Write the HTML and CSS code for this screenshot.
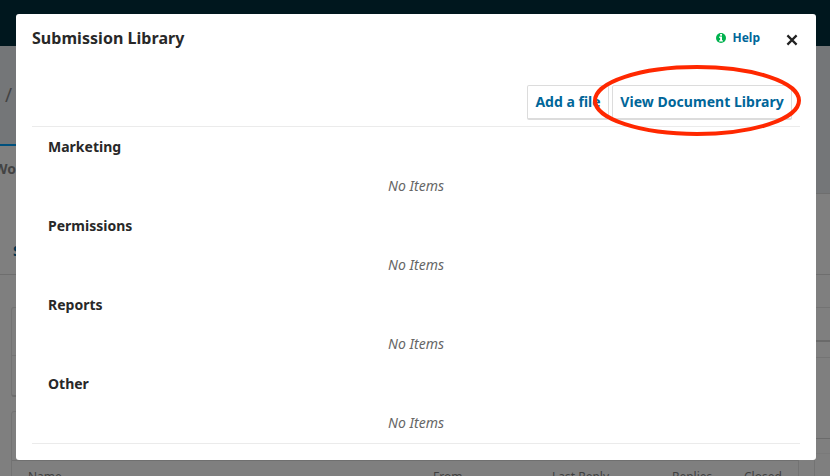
FILE: index.html
```html
<!DOCTYPE html>
<html lang="en">
<head>
<meta charset="utf-8">
<title>Submission Library</title>
<link rel="stylesheet" href="styles.css">
</head>
<body>
<div class="page">
  <header class="topbar"></header>
  <div class="band">
    <div class="crumb">/</div>
    <div class="tab"><span>Wo</span></div>
  </div>
  <div class="subhead"><span>S</span></div>
  <div class="content">
    <main class="main">
      <section class="panel summary"><div class="summary-head"></div></section>
      <section class="panel discussions">
        <div class="panel-head"></div>
        <div class="thead"><span class="name">Name</span><span class="from">From</span><span class="last">Last Reply</span><span class="replies">Replies</span><span>Closed</span></div>
      </section>
    </main>
    <aside class="side">
      <div class="side-action"></div>
      <div class="side-title"></div>
      <div class="side-body"></div>
      <div class="side-foot"></div>
    </aside>
  </div>
</div>
<div class="modal" role="dialog">
  <div class="modal-head">
    <h1>Submission Library</h1>
    <a class="help"><svg width="10" height="10" viewBox="0 0 10 10"><circle cx="5" cy="5" r="5" fill="#00b24e"/><path d="M4.1 1.1h1.9v1.6H4.1zM3.2 3.6h2.8v3.6h.9v1.3H3.1V7.2h1V4.9h-.9z" fill="#fff"/></svg><span>Help</span></a>
    <svg class="close" width="12" height="12" viewBox="0 0 12 12"><path d="M1.4 1.4l9.2 9.2M10.6 1.4l-9.2 9.2" stroke="#222" stroke-width="2.2"/></svg>
  </div>
  <div class="actions"><a class="btn">Add a file</a><a class="btn view">View Document Library</a></div>
  <div class="list">
    <section><h2>Marketing</h2><p>No Items</p></section>
    <section><h2>Permissions</h2><p>No Items</p></section>
    <section><h2>Reports</h2><p>No Items</p></section>
    <section><h2>Other</h2><p>No Items</p></section>
  </div>
</div>
<svg class="highlight" width="210" height="74" viewBox="0 0 210 74"><ellipse cx="105" cy="37.5" rx="102" ry="33.5" fill="none" stroke="#ff2800" stroke-width="4"/></svg>
</body>
</html>
```
FILE: styles.css
```css
* { box-sizing: border-box; }
body {
  margin: 0;
  width: 830px;
  height: 476px;
  overflow: hidden;
  position: relative;
  background: #7f7f7f;
  font-family: "Noto Sans", sans-serif;
  color: #282828;
}
h1, h2, p { margin: 0; }
.page { height: 476px; overflow: hidden; }
.topbar { height: 46px; background: #00171e; }
.band {
  height: 148px;
  background: #747678;
  border-bottom: 1px solid #6e6e6e;
}
.crumb { height: 98px; padding: 37px 0 0 5px; font-size: 19px; line-height: 24px; color: #434343; }
.tab {
  width: 40px;
  height: 50px;
  border-top: 2px solid #00507d;
  background: #7f7f7f;
  padding-top: 13px;
  font-size: 14px;
  line-height: 20px;
  font-weight: 700;
  color: #434343;
}
.tab span { margin-left: -6px; }
.subhead {
  height: 81px;
  border-bottom: 1px solid #6e6e6e;
  padding: 47px 0 0 13px;
  font-size: 14px;
  line-height: 20px;
  font-weight: 700;
  color: #00344f;
}
.content { display: flex; padding: 32px 0 0 11px; gap: 15px; }
.main { width: 788px; flex: none; }
.panel { border: 1px solid #737373; border-radius: 3px; }
.summary { height: 90px; border-bottom: 2px solid #6e6e6e; }
.summary-head { height: 48px; border-bottom: 1px solid #747474; }
.discussions { margin-top: 14px; height: 90px; }
.panel-head { height: 49px; border-bottom: 1px solid #707070; }
.thead {
  display: flex;
  padding: 7px 0 0 16px;
  font-size: 12px;
  line-height: 18px;
  color: #3f3f3f;
}
.name { width: 405px; }
.from { width: 119px; }
.last { width: 120px; }
.replies { width: 72px; }
.side { flex: 1; border: solid #737373; border-width: 1px 0 0 1px; height: 180px; }
.side-action { height: 34px; border-bottom: 2px solid #6a6a6a; }
.side-title { height: 16px; border-bottom: 1px solid #747474; }
.side-body { height: 81px; border-bottom: 1px solid #6b6b6b; }
.side-foot { height: 15px; border-bottom: 1px solid #7a7a7a; }
.modal {
  position: absolute;
  left: 16px;
  top: 14px;
  width: 800px;
  height: 446px;
  border-radius: 3px;
  background: #fff;
  padding: 0 16px;
}
.modal-head { display: flex; align-items: center; height: 71px; padding: 0 2px 23px 0; }
h1 { flex: 1; font-size: 16px; line-height: 24px; font-weight: 700; letter-spacing: 0.04px; }
.help { display: flex; align-items: center; gap: 6px; margin-right: 26px; font-size: 12px; line-height: 18px; font-weight: 700; color: #069; }
.close { margin-top: 4px; }
.actions { display: flex; justify-content: flex-end; gap: 3px; padding-right: 8px; height: 41px; }
.btn {
  width: 82px;
  height: 35px;
  border: 1px solid #dcdcdc;
  border-bottom-width: 2px;
  border-radius: 2px;
  font-size: 14px;
  line-height: 32px;
  text-align: center;
  white-space: nowrap;
  font-weight: 700;
  color: #069;
}
.btn.view { width: 180px; letter-spacing: 0.04px; }
.list { height: 318px; border: solid #ebebeb; border-width: 1px 0; }
.list section { height: 79px; padding-top: 10px; font-size: 14px; line-height: 20px; }
h2 { padding-left: 16px; font-size: 14px; line-height: 20px; font-weight: 700; }
.list p { margin-top: 19px; text-align: center; font-style: italic; color: #666; }
.highlight { position: absolute; left: 592px; top: 63px; }
```
